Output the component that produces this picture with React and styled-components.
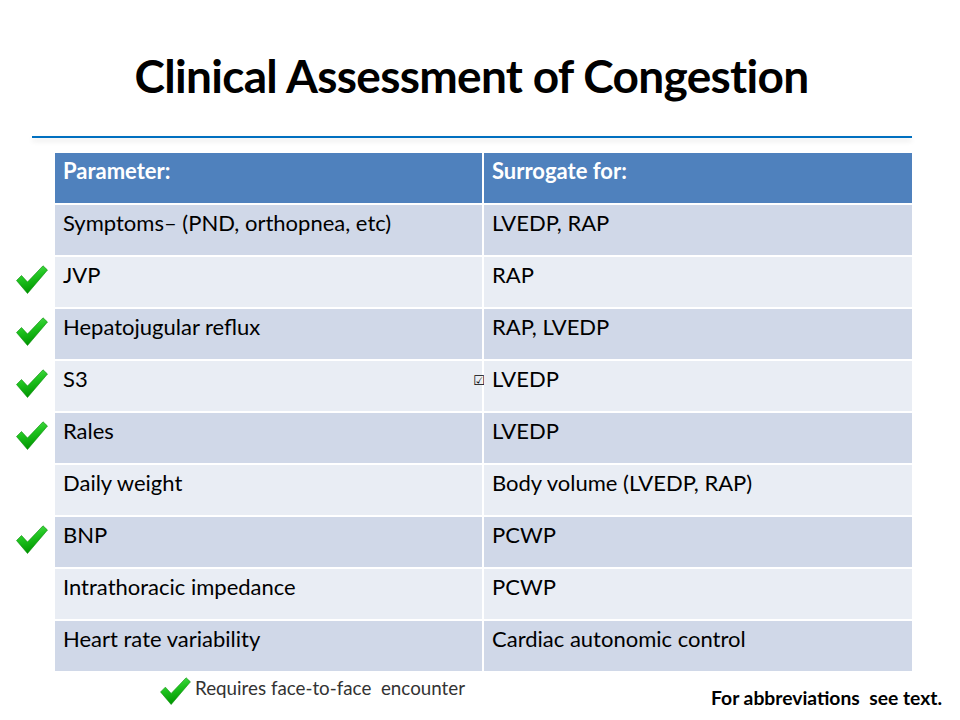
import React from "react";
import styled, { createGlobalStyle } from "styled-components";

const Global = createGlobalStyle`
  html, body { margin: 0; padding: 0; background: #ffffff; }
  body { width: 960px; height: 720px; overflow: hidden; font-family: Lato, "Liberation Sans", sans-serif; }
`;

const Slide = styled.div`
  width: 960px;
  height: 720px;
  display: flex;
  flex-direction: column;
  background: #ffffff;
`;

const TitleBar = styled.header`
  height: 136px;
  padding: 0 40px 0 23px;
  display: flex;
  align-items: flex-start;
  justify-content: center;
`;

const Title = styled.h1`
  margin: 48px 0 0;
  font-family: Lato, "Liberation Sans", sans-serif;
  font-weight: 700;
  font-size: 46px;
  letter-spacing: -0.7px;
  line-height: 56px;
  color: #000000;
`;

const Rule = styled.div`
  margin-left: 32px;
  width: 880px;
  height: 2px;
  background: #0070c0;
  box-shadow: 0 3px 5px rgba(0, 0, 0, 0.12);
`;

const Table = styled.div`
  margin-top: 15px;
  display: flex;
  flex-direction: column;
  gap: 2px;
`;

const Row = styled.div`
  display: flex;
  height: 50px;
`;

const Marker = styled.div`
  width: 55px;
  flex: none;
  display: flex;
  justify-content: flex-end;
  padding: 8px 7px 0 0;
  box-sizing: border-box;
`;

const Cell = styled.div`
  position: relative;
  width: ${(p) => p.$w}px;
  flex: none;
  box-sizing: border-box;
  padding: 4px 8px 0;
  margin-left: ${(p) => (p.$gap ? 2 : 0)}px;
  background: ${(p) => (p.$head ? "#4f81bd" : p.$dark ? "#d0d8e8" : "#e9edf4")};
  color: ${(p) => (p.$head ? "#ffffff" : "#000000")};
  font-family: Lato, "Liberation Sans", sans-serif;
  font-weight: ${(p) => (p.$head ? 700 : 400)};
  font-size: 22px;
  line-height: 27px;
  letter-spacing: 0;
`;

const Tick = styled.span`
  position: absolute;
  right: -3px;
  top: 13px;
  font-family: "DejaVu Sans", sans-serif;
  font-size: 13px;
  line-height: 13px;
  color: #000;
`;

const Footer = styled.div`
  display: flex;
  justify-content: space-between;
  align-items: flex-start;
  padding: 6px 18px 0 160px;
`;

const Legend = styled.div`
  display: flex;
  align-items: flex-start;
  gap: 4px;
  font-family: Lato, "Liberation Sans", sans-serif;
  font-size: 18.8px;
  color: #333333;
  line-height: 22px;
`;

const LegendText = styled.span`
  padding-top: 0;
`;

const Note = styled.div`
  margin-top: 10px;
  font-family: Lato, "Liberation Sans", sans-serif;
  font-weight: 700;
  font-size: 19.3px;
  line-height: 22px;
  color: #000000;
`;

let gid = 0;
const Check = ({ w = 32, h = 29 }) => {
  const id = `cg${gid++}`;
  return (
    <svg width={w} height={h} viewBox="0 0 32 29">
      <defs>
        <linearGradient id={id} x1="0" y1="0" x2="0.3" y2="1">
          <stop offset="0" stopColor="#5ae85a" />
          <stop offset="0.5" stopColor="#1ec21e" />
          <stop offset="1" stopColor="#009600" />
        </linearGradient>
      </defs>
      <path
        d="M0.5 15.5 L5.5 10.5 L11.5 17 L27 0.8 L31.5 5 L11.5 28.5 Z"
        fill={`url(#${id})`}
        stroke="#0a8a0a"
        strokeWidth="0.6"
        strokeLinejoin="round"
      />
    </svg>
  );
};

const rows = [
  { p: "Symptoms– (PND, orthopnea, etc)", s: "LVEDP, RAP", c: false },
  { p: "JVP", s: "RAP", c: true },
  { p: "Hepatojugular reflux", s: "RAP, LVEDP", c: true },
  { p: "S3", s: "LVEDP", c: true, t: true },
  { p: "Rales", s: "LVEDP", c: true },
  { p: "Daily weight", s: "Body volume (LVEDP, RAP)", c: false },
  { p: "BNP", s: "PCWP", c: true },
  { p: "Intrathoracic impedance", s: "PCWP", c: false },
  { p: "Heart rate variability", s: "Cardiac autonomic control", c: false },
];

export default function App() {
  return (
    <>
      <Global />
      <Slide>
        <TitleBar>
          <Title>Clinical Assessment of Congestion</Title>
        </TitleBar>
        <Rule />
        <Table>
          <Row>
            <Marker />
            <Cell $w={427} $head>Parameter:</Cell>
            <Cell $w={428} $head $gap>Surrogate for:</Cell>
          </Row>
          {rows.map((r, i) => (
            <Row key={r.p}>
              <Marker>{r.c && <Check />}</Marker>
              <Cell $w={427} $dark={i % 2 === 0}>
                {r.p}
                {r.t && <Tick>☑</Tick>}
              </Cell>
              <Cell $w={428} $dark={i % 2 === 0} $gap>
                {r.s}
              </Cell>
            </Row>
          ))}
        </Table>
        <Footer>
          <Legend>
            <Check w={31} h={28} />
            <LegendText>Requires face-to-face&nbsp; encounter</LegendText>
          </Legend>
          <Note>For abbreviations&nbsp; see text.</Note>
        </Footer>
      </Slide>
    </>
  );
}
